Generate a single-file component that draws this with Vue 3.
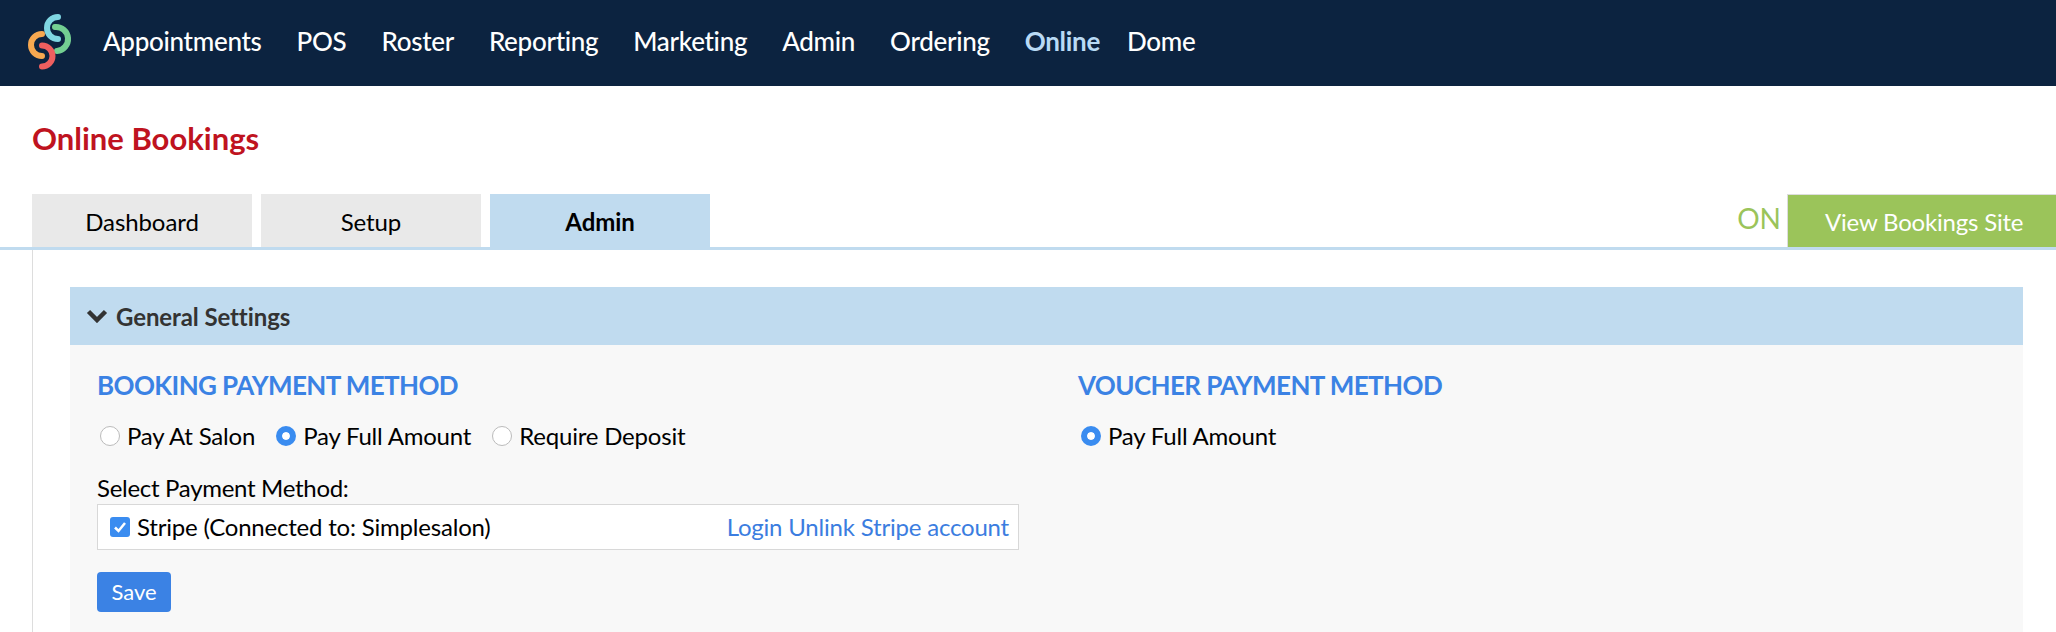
<template>
  <div class="page">
    <nav class="topbar">
      <svg class="logo" width="46" height="58" viewBox="0 0 46 58" fill="none" stroke-width="6" stroke-linecap="round">
        <path d="M27 15 A12 12 0 0 1 29 39" stroke="#74cf92" />
        <path d="M30 5 A11 11 0 0 0 30 27" stroke="#7fd6e2" />
        <path d="M14 22 A11 11 0 0 0 14 44" stroke="#f7a850" />
        <path d="M14 33.500 A10.500 10.500 0 0 1 14 54.500" stroke="#ee5f5f" />
      </svg>
      <a v-for="item in navItems" :key="item" class="nav-link" :class="{ active: item === 'Online' }">{{ item }}</a>
    </nav>

    <h1 class="title">Online Bookings</h1>

    <div class="tab-row">
      <div v-for="tab in tabs" :key="tab" class="tab" :class="{ current: tab === 'Admin' }">{{ tab }}</div>
      <div class="tab-right">
        <span class="status">ON</span>
        <a class="site-btn">View Bookings Site</a>
      </div>
    </div>

    <div class="panel">
      <section class="settings">
        <header class="settings-head">
          <svg class="chevron" width="22" height="14" viewBox="0 0 22 14" fill="none">
            <path d="M2.500 2.500 L11 11 L19.500 2.500" stroke="#333" stroke-width="4.500" />
          </svg>
          General Settings
        </header>
        <div class="settings-body">
          <div class="col col-left">
            <h2 class="col-title">BOOKING PAYMENT METHOD</h2>
            <div class="radios">
              <label v-for="opt in bookingOptions" :key="opt" class="radio-item">
                <span class="radio" :class="{ on: opt === 'Pay Full Amount' }"></span>{{ opt }}
              </label>
            </div>
            <div class="select-label">Select Payment Method:</div>
            <div class="method-box">
              <span class="check">
                <svg width="20" height="20" viewBox="0 0 20 20" fill="none">
                  <path d="M5 10.500 L8.500 14 L15 6" stroke="#fff" stroke-width="2.500" />
                </svg>
              </span>
              <span class="method-name">Stripe (Connected to: Simplesalon)</span>
              <span class="method-links"><a>Login</a> <a>Unlink Stripe account</a></span>
            </div>
            <button class="save">Save</button>
          </div>
          <div class="col col-right">
            <h2 class="col-title">VOUCHER PAYMENT METHOD</h2>
            <div class="radios">
              <label class="radio-item"><span class="radio on"></span>Pay Full Amount</label>
            </div>
          </div>
        </div>
      </section>
    </div>
  </div>
</template>

<script setup>
const navItems = ['Appointments', 'POS', 'Roster', 'Reporting', 'Marketing', 'Admin', 'Ordering', 'Online', 'Dome']
const tabs = ['Dashboard', 'Setup', 'Admin']
const bookingOptions = ['Pay At Salon', 'Pay Full Amount', 'Require Deposit']
</script>

<style>
html, body {
  margin: 0;
  background: #fff;
  overflow: hidden;
}
</style>

<style scoped>
.page {
  height: 632px;
  overflow: hidden;
  font-family: Lato, "Open Sans", sans-serif;
  color: #000;
}

.topbar {
  height: 86px;
  background: #0c2340;
  display: flex;
  align-items: center;
  padding: 0 0 4px 28px;
  box-sizing: border-box;
}

.logo {
  margin-right: 29px;
  flex: none;
}

.nav-link {
  color: #fff;
  font-size: 26px;
  letter-spacing: -0.3px;
  font-weight: 500;
  margin-right: 35px;
}

.nav-link.active {
  color: #b9daf5;
  font-weight: 700;
  margin-right: 27px;
}

.title {
  margin: 0;
  padding: 35px 0 0 32px;
  height: 108px;
  box-sizing: border-box;
  font-size: 31px;
  line-height: 34px;
  font-weight: 700;
  color: #bf1320;
}

.tab-row {
  display: flex;
  height: 56px;
  padding-left: 32px;
  box-sizing: border-box;
  border-bottom: 3px solid #c0dbef;
  gap: 9px;
}

.tab {
  width: 220px;
  height: 53px;
  background: #e9e9e9;
  font-size: 24px;
  letter-spacing: -0.1px;
  line-height: 56px;
  text-align: center;
}

.tab.current {
  background: #c0dbef;
  font-weight: 700;
}

.tab-right {
  margin-left: auto;
  display: flex;
  align-items: flex-start;
}

.status {
  color: #9bc45a;
  font-size: 28px;
  line-height: 48px;
  margin-right: 6px;
}

.site-btn {
  width: 269px;
  height: 53px;
  box-sizing: border-box;
  background: #9bc45a;
  border-top: 1px solid #ddd;
  border-left: 1px solid #ddd;
  color: #fff;
  font-size: 24px;
  letter-spacing: -0.2px;
  line-height: 54px;
  padding-left: 37px;
}

.panel {
  border-left: 1px solid #ddd;
  margin-left: 32px;
  padding: 37px 33px 0 37px;
}

.settings-head {
  height: 58px;
  background: #c0dbef;
  display: flex;
  align-items: center;
  padding-left: 16px;
  gap: 8px;
  font-size: 24px;
  letter-spacing: -0.1px;
  font-weight: 700;
  color: #333;
}

.chevron {
  flex: none;
}

.settings-body {
  background: #f8f8f8;
  height: 300px;
  padding: 25px 0 0 27px;
  display: flex;
}

.col-left {
  width: 981px;
}

.col-title {
  margin: 0;
  font-size: 26px;
  line-height: 30px;
  font-weight: 700;
  color: #3b82e4;
  letter-spacing: -0.6px;
}

.radios {
  display: flex;
  gap: 21px;
  margin: 20px 0 0 3px;
}

.col-right .radios {
  margin-left: 3px;
}

.radio-item {
  display: flex;
  align-items: center;
  font-size: 24px;
  letter-spacing: -0.2px;
  line-height: 32px;
}

.radio {
  width: 20px;
  height: 20px;
  box-sizing: border-box;
  border-radius: 50%;
  background: #fff;
  border: 1px solid #bbb;
  margin-right: 7px;
}

.radio.on {
  background: #3a8cf0;
  border: 6px solid #3a8cf0;
  box-shadow: inset 0 0 0 4px #fff;
}

.select-label {
  margin-top: 20px;
  font-size: 24px;
  letter-spacing: -0.3px;
  line-height: 32px;
}

.method-box {
  width: 922px;
  height: 46px;
  box-sizing: border-box;
  background: #fff;
  border: 1px solid #d8d8d8;
  display: flex;
  align-items: center;
  padding: 0 9px 0 12px;
  font-size: 24px;
  letter-spacing: -0.2px;
}

.method-name,
.method-links {
  margin-bottom: 2px;
}

.check {
  width: 20px;
  height: 20px;
  border-radius: 3px;
  background: #3a8cf0;
  margin-right: 7px;
  display: flex;
}

.method-links {
  margin-left: auto;
  color: #3b7de0;
}

.save {
  display: block;
  margin-top: 22px;
  width: 74px;
  height: 40px;
  border: 0;
  border-radius: 4px;
  background: #3b82e4;
  color: #fff;
  font-family: inherit;
  font-size: 22px;
  padding: 0 0 2px;
}
</style>
